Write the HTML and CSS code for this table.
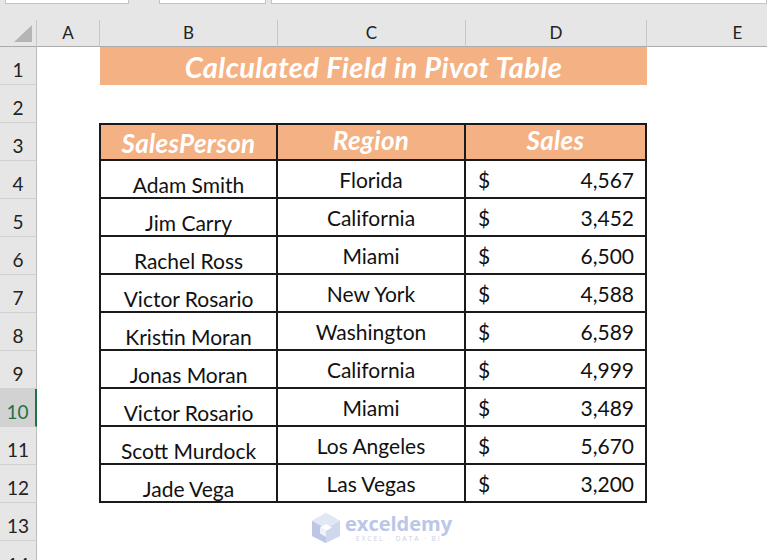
FILE: index.html
```html
<!DOCTYPE html>
<html>
<head>
<meta charset="utf-8">
<link rel="stylesheet" href="styles.css">
</head>
<body>
<div class="app">
  <div class="topbar">
    <div class="box b1"></div>
    <div class="box b2"></div>
    <div class="box b3"></div>
  </div>
  <div class="grid">
    <div class="corner"><span class="tri"></span></div>
    <div class="ch">A</div><div class="ch">B</div><div class="ch">C</div><div class="ch">D</div><div class="ch">E</div>

    <div class="rh">1</div><div class="c"></div><div class="title">Calculated Field in Pivot Table</div><div class="c"></div>
    <div class="rh">2</div><div class="c"></div><div class="c"></div><div class="c"></div><div class="c"></div><div class="c"></div>

    <div class="rh">3</div><div class="c"></div>
    <div class="tc th first colb">SalesPerson</div><div class="tc th colc">Region</div><div class="tc th cold">Sales</div><div class="c"></div>

    <div class="rh">4</div><div class="c"></div>
    <div class="tc first colb">Adam Smith</div><div class="tc colc">Florida</div><div class="tc num"><span>$</span><span>4,567</span></div><div class="c"></div>

    <div class="rh">5</div><div class="c"></div>
    <div class="tc first colb">Jim Carry</div><div class="tc colc">California</div><div class="tc num"><span>$</span><span>3,452</span></div><div class="c"></div>

    <div class="rh">6</div><div class="c"></div>
    <div class="tc first colb">Rachel Ross</div><div class="tc colc">Miami</div><div class="tc num"><span>$</span><span>6,500</span></div><div class="c"></div>

    <div class="rh">7</div><div class="c"></div>
    <div class="tc first colb">Victor Rosario</div><div class="tc colc">New York</div><div class="tc num"><span>$</span><span>4,588</span></div><div class="c"></div>

    <div class="rh">8</div><div class="c"></div>
    <div class="tc first colb">Kristin Moran</div><div class="tc colc">Washington</div><div class="tc num"><span>$</span><span>6,589</span></div><div class="c"></div>

    <div class="rh">9</div><div class="c"></div>
    <div class="tc first colb">Jonas Moran</div><div class="tc colc">California</div><div class="tc num"><span>$</span><span>4,999</span></div><div class="c"></div>

    <div class="rh sel">10</div><div class="c"></div>
    <div class="tc first colb">Victor Rosario</div><div class="tc colc">Miami</div><div class="tc num"><span>$</span><span>3,489</span></div><div class="c"></div>

    <div class="rh">11</div><div class="c"></div>
    <div class="tc first colb">Scott Murdock</div><div class="tc colc">Los Angeles</div><div class="tc num"><span>$</span><span>5,670</span></div><div class="c"></div>

    <div class="rh">12</div><div class="c"></div>
    <div class="tc first colb">Jade Vega</div><div class="tc colc">Las Vegas</div><div class="tc num"><span>$</span><span>3,200</span></div><div class="c"></div>

    <div class="rh">13</div><div class="c"></div><div class="c"></div><div class="c"></div><div class="c"></div><div class="c"></div>
    <div class="rh last">14</div><div class="c"></div><div class="c"></div><div class="c"></div><div class="c"></div><div class="c"></div>
  </div>

  <div class="watermark">
    <svg class="wm-icon" width="30" height="32" viewBox="0 0 30 32">
      <polygon points="15,1 29,9 29,24 15,31 1,24 1,9" fill="#c9d3ec"/>
      <polygon points="15,1 29,9 15,17 1,9" fill="#dfe5f4"/>
      <polygon points="1,9 15,17 15,31 1,24" fill="#b4c1e2"/>
      <polygon points="15,12 21,15.5 15,19 9,15.5" fill="#ffffff"/>
      <polygon points="9,15.5 15,19 15,25 9,21.5" fill="#eef1f9"/>
    </svg>
    <div class="wm-text">
      <div class="wm-name">exceldemy</div>
      <div class="wm-sub">EXCEL · DATA · BI</div>
    </div>
  </div>
</div>
</body>
</html>
```
FILE: styles.css
```css
* { box-sizing: border-box; }
html, body { margin: 0; padding: 0; background: #ffffff; }
.app {
  position: relative;
  width: 767px;
  height: 560px;
  overflow: hidden;
  font-family: Lato, "Noto Sans", sans-serif;
  color: #111111;
}
.topbar {
  height: 20px;
  background: #e6e6e6;
  display: flex;
  align-items: flex-start;
}
.box {
  height: 4px;
  background: #ffffff;
  border: 1px solid #c4c4c4;
  border-top: none;
}
.b1 { margin-left: 5px; width: 125px; }
.b2 { margin-left: 30px; width: 108px; }
.b3 { margin-left: 5px; width: 500px; }

.grid {
  display: grid;
  grid-template-columns: 37px 63px 178px 188px 181px 182px;
  grid-template-rows: 27px repeat(14, 38px);
}
.corner {
  background: #e6e6e6;
  border-right: 1px solid #c8c8c8;
  border-bottom: 1px solid #ababab;
  position: relative;
}
.tri {
  position: absolute;
  right: 4px;
  bottom: 4px;
  width: 0;
  height: 0;
  border-left: 18px solid transparent;
  border-bottom: 17px solid #b5b5b5;
}
.ch {
  background: #e6e6e6;
  border-right: 1px solid #c8c8c8;
  border-bottom: 1px solid #ababab;
  display: flex;
  align-items: flex-end;
  justify-content: center;
  padding-bottom: 3px;
  font-size: 17px;
  color: #222222;
}
.rh {
  background: #e6e6e6;
  border-right: 1px solid #bcbcbc;
  border-bottom: 1px solid #d0d0d0;
  display: flex;
  align-items: flex-end;
  justify-content: center;
  padding-bottom: 3px;
  font-size: 19px;
  color: #222222;
}
.rh.last { align-items: flex-start; padding-top: 12px; }
.rh.sel {
  background: #d2d2d2;
  color: #217346;
  border-right: 2px solid #217346;
}
.c { background: #ffffff; }
.title {
  grid-column: span 3;
  background: #f4b183;
  color: #ffffff;
  font-weight: bold;
  font-style: italic;
  font-size: 29px;
  letter-spacing: 0.4px;
  display: flex;
  align-items: flex-end;
  justify-content: center;
  padding-bottom: 1px;
}
.tc {
  border-right: 2px solid #1a1a1a;
  border-bottom: 2px solid #1a1a1a;
  display: flex;
  align-items: flex-end;
  justify-content: center;
  font-size: 21px;
  color: #111111;
}
.tc.first { border-left: 2px solid #1a1a1a; margin-left: -1px; }
.tc.colb { padding-bottom: 0; }
.tc.colc { padding-bottom: 5px; }
.th {
  border-top: 2px solid #1a1a1a;
  background: #f4b183;
  color: #ffffff;
  font-weight: bold;
  font-style: italic;
  font-size: 26px;
  letter-spacing: 0.3px;
}
.th.colb { padding-bottom: 0; }
.th.colc, .th.cold { padding-bottom: 3px; }
.tc.num {
  justify-content: space-between;
  padding: 0 11px 5px 12px;
}
.watermark {
  position: absolute;
  left: 311px;
  top: 512px;
  display: flex;
  align-items: center;
  gap: 4px;
  opacity: 0.9;
}
.wm-text { display: flex; flex-direction: column; align-items: center; }
.wm-name {
  font-family: "Open Sans", sans-serif;
  font-weight: bold;
  font-size: 20px;
  line-height: 22px;
  color: #b3c1e6;
}
.wm-sub {
  font-family: "Open Sans", sans-serif;
  font-size: 7px;
  line-height: 8px;
  letter-spacing: 1.8px;
  color: #c5cce0;
}
```
